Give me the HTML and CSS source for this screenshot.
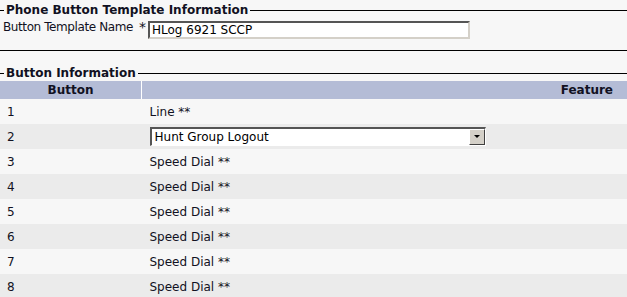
FILE: index.html
```html
<!DOCTYPE html>
<html lang="en">
<head>
    <meta charset="UTF-8">
    <title>Phone Button Template Configuration</title>
    <link rel="stylesheet" href="styles.css">
</head>
<body>
    <div class="section">
        <div class="legend"><span>Phone Button Template Information</span></div>
        <div class="field-row">
            <label for="tpl-name">Button Template Name</label>
            <span class="req">*</span>
            <input type="text" id="tpl-name" class="text-input" value="HLog 6921 SCCP">
        </div>
    </div>

    <div class="section buttons">
        <div class="legend"><span>Button Information</span></div>
        <table class="btn-table">
            <thead>
                <tr>
                    <th class="col-num">Button</th>
                    <th class="col-feature">Feature</th>
                </tr>
            </thead>
            <tbody>
                <tr><td>1</td><td>Line **</td></tr>
                <tr>
                    <td>2</td>
                    <td>
                        <div class="select">
                            <span class="select-value">Hunt Group Logout</span>
                            <span class="select-arrow"></span>
                        </div>
                    </td>
                </tr>
                <tr><td>3</td><td>Speed Dial **</td></tr>
                <tr><td>4</td><td>Speed Dial **</td></tr>
                <tr><td>5</td><td>Speed Dial **</td></tr>
                <tr><td>6</td><td>Speed Dial **</td></tr>
                <tr><td>7</td><td>Speed Dial **</td></tr>
                <tr><td>8</td><td>Speed Dial **</td></tr>
            </tbody>
        </table>
    </div>
</body>
</html>
```

FILE: styles.css
```css
body {
    margin: 0;
    background-color: #f7f7f7;
    font-family: "DejaVu Sans", Verdana, sans-serif;
    font-size: 12px;
    color: #111122;
}

.legend {
    display: flex;
    align-items: center;
    height: 20px;
    font-weight: bold;
}
.legend::before {
    content: "";
    width: 4px;
    border-top: 1px solid #000;
}
.legend::after {
    content: "";
    flex: 1;
    border-top: 1px solid #000;
}
.legend span {
    padding: 0 2px;
}

.section {
    border-bottom: 1px solid #000;
    padding-bottom: 11px;
}
.section.buttons {
    border-bottom: none;
    margin-top: 12px;
    padding-bottom: 0;
}

.field-row {
    display: flex;
    align-items: flex-start;
    padding-left: 3px;
}
.field-row label {
    letter-spacing: -0.4px;
}
.req {
    margin-left: 6px;
    margin-right: 2px;
    font-size: 14px;
    line-height: 14px;
}
.text-input {
    width: 322px;
    height: 18px;
    box-sizing: border-box;
    margin-top: 1px;
    padding: 0 2px;
    font-family: "DejaVu Sans", Verdana, sans-serif;
    font-size: 12px;
    color: #000;
    background: #fff;
    border-top: 2px solid #555;
    border-left: 2px solid #555;
    border-right: 2px solid #d4d0c8;
    border-bottom: 2px solid #d4d0c8;
    outline: none;
}

.btn-table {
    width: 100%;
    border-collapse: collapse;
    margin-top: -2px;
}
.btn-table thead tr {
    background-color: #b4bcd6;
}
.btn-table th {
    height: 18px;
    padding: 0;
    font-weight: bold;
}
.btn-table th.col-num {
    width: 141px;
    text-align: center;
    border-right: 1px solid #fff;
}
.btn-table th.col-feature {
    text-align: right;
    padding-right: 14px;
}
.btn-table td {
    height: 25px;
    padding: 0 7px;
}
.btn-table td + td {
    padding-left: 8px;
}
.btn-table tbody tr:nth-child(odd) {
    background-color: #f7f7f7;
}
.btn-table tbody tr:nth-child(even) {
    background-color: #ebebeb;
}

.select {
    display: flex;
    align-items: center;
    width: 336px;
    height: 19px;
    box-sizing: border-box;
    background: #fff;
    border-top: 2px solid #555;
    border-left: 2px solid #555;
    border-right: 1px solid #fff;
    border-bottom: 1px solid #fff;
}
.select-value {
    flex: 1;
    padding-left: 3px;
    color: #000;
}
.select-arrow {
    position: relative;
    width: 16px;
    height: 16px;
    box-sizing: border-box;
    background: #d4d0c8;
    border-top: 1px solid #fff;
    border-left: 1px solid #fff;
    border-right: 1px solid #404040;
    border-bottom: 1px solid #404040;
}
.select-arrow::after {
    content: "";
    position: absolute;
    left: 4px;
    top: 5px;
    border-left: 3px solid transparent;
    border-right: 3px solid transparent;
    border-top: 3px solid #000;
}
```
